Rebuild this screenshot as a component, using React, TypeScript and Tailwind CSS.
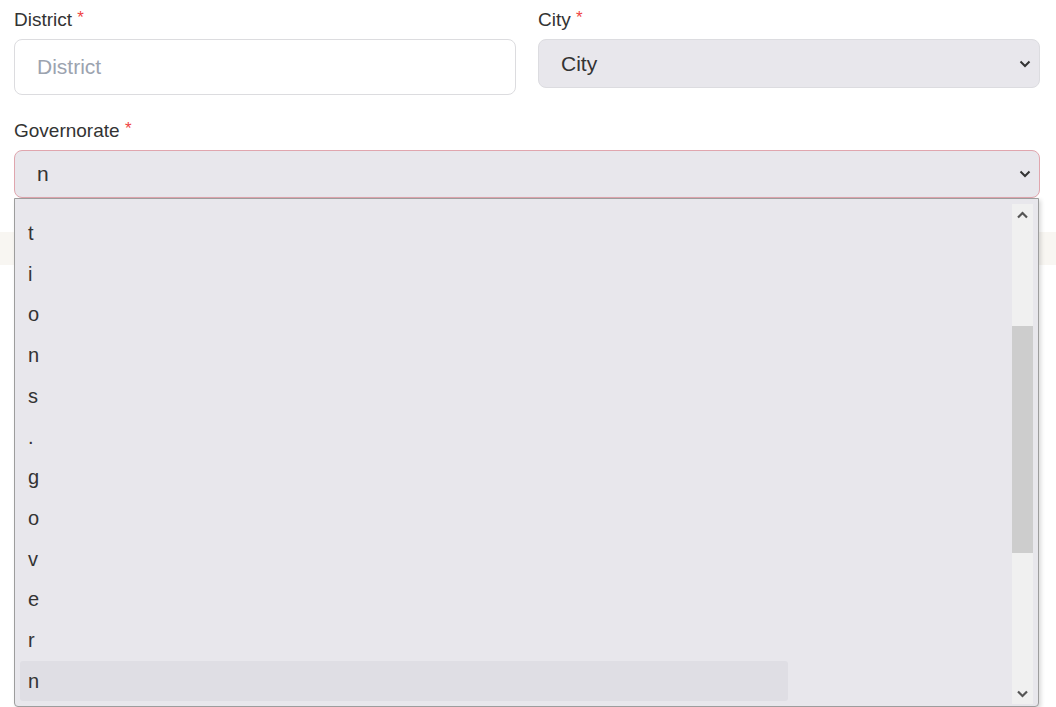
import React from 'react';

const font = { fontFamily: '"Liberation Sans", Arial, sans-serif' };

function Label({ text }: { text: string }) {
  return (
    <div className="h-[24px] mb-[7px] text-[19px] leading-[24px] text-[#333]">
      {text} <span className="text-[17px] align-top leading-[20px] text-[#ef4444]">*</span>
    </div>
  );
}

function Chevron({ className = '' }: { className?: string }) {
  return (
    <svg width="12" height="8" viewBox="0 0 12 8" className={className}>
      <path d="M1.5 1.5 L6 6 L10.5 1.5" fill="none" stroke="#333" strokeWidth="2" />
    </svg>
  );
}

function ScrollArrow({ up }: { up?: boolean }) {
  return (
    <svg width="11" height="8" viewBox="0 0 11 8">
      <path
        d={up ? 'M1 6.5 L5.5 2 L10 6.5' : 'M1 1.5 L5.5 6 L10 1.5'}
        fill="none"
        stroke="#555"
        strokeWidth="2.2"
      />
    </svg>
  );
}

const letters = ['t', 'i', 'o', 'n', 's', '.', 'g', 'o', 'v', 'e', 'r', 'n'];

export default function App() {
  return (
    <div className="min-h-screen bg-white overflow-hidden" style={font}>
      <div className="grid grid-cols-2 gap-x-[22px] pl-[14px] pr-[16px] pt-[8px]">
        <div>
          <Label text="District" />
          <div className="h-[56px] rounded-lg border border-[#dcdcdf] bg-white flex items-center pl-[22px] text-[21px] text-[#9ca3af]">
            District
          </div>
        </div>
        <div>
          <Label text="City" />
          <div className="h-[49px] rounded-lg border border-[#dcdce0] bg-[#e8e7ec] flex items-center justify-between pl-[22px] pr-[8px] text-[21px] text-[#333]">
            <span>City</span>
            <Chevron />
          </div>
        </div>
      </div>

      <div className="relative mt-[24px] pl-[14px] pr-[16px]">
        <Label text="Governorate" />
        <div className="h-[48px] rounded-lg border border-[#e0a6ae] bg-[#e8e7ec] flex items-center justify-between pl-[22px] pr-[8px] text-[21px] text-[#333]">
          <span>n</span>
          <Chevron />
        </div>

        {/* open listbox */}
        <div className="absolute left-[14px] top-full w-[1025px] h-[509px] z-10 flex bg-[#e8e7ec] border border-[#9d9d9d] rounded-b-[4px] shadow-[2px_2px_4px_rgba(0,0,0,0.15)]">
          <div className="flex-1 overflow-hidden pt-[13.6px] pl-[5px]">
            {letters.map((l, i) => (
              <div
                key={i}
                className={
                  'h-[40.73px] w-[768px] flex items-center pl-[8px] text-[20px] text-[#333] rounded-[3px] ' +
                  (i === letters.length - 1 ? 'bg-[#dfdee4] text-[#111]' : '')
                }
              >
                {l}
              </div>
            ))}
          </div>
          <div className="w-[21px] mt-[5px] mb-[2px] mr-[5px] bg-[#f0f0f0] flex flex-col items-center">
            <div className="h-[18px] flex items-center pt-[3px]">
              <ScrollArrow up />
            </div>
            <div className="h-[104px]" />
            <div className="w-full h-[227px] bg-[#cdcdcd]" />
            <div className="flex-1" />
            <div className="h-[18px] flex items-center pb-[3px]">
              <ScrollArrow />
            </div>
          </div>
        </div>
      </div>

      <div className="mt-[34px] h-[33px] bg-[#f8f6f2]" />
    </div>
  );
}
